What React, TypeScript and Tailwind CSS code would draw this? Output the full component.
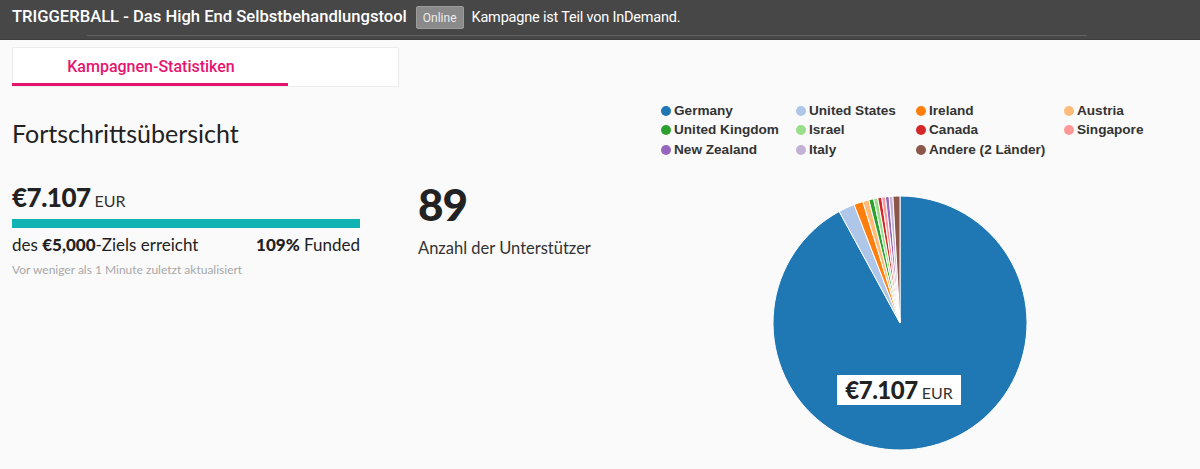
const slices = [
  { name: "Germany", color: "#1f77b4", deg: 331.4 },
  { name: "United States", color: "#aec7e8", deg: 7.4 },
  { name: "Ireland", color: "#ff7f0e", deg: 4.2 },
  { name: "Austria", color: "#ffbb78", deg: 2.8 },
  { name: "United Kingdom", color: "#2ca02c", deg: 2.2 },
  { name: "Israel", color: "#98df8a", deg: 1.9 },
  { name: "Canada", color: "#d62728", deg: 1.8 },
  { name: "Singapore", color: "#ff9896", deg: 1.7 },
  { name: "New Zealand", color: "#9467bd", deg: 1.7 },
  { name: "Italy", color: "#c5b0d5", deg: 1.7 },
  { name: "Andere (2 Länder)", color: "#8c564b", deg: 3.2 },
];

// legend is laid out row by row, four per row
const legendCols = ["w-[135px]", "w-[120px]", "w-[148px]", "w-[110px]"];

function arcPath(cx: number, cy: number, r: number, a0: number, a1: number) {
  const p = (a: number) => {
    const rad = (a * Math.PI) / 180;
    return [cx + r * Math.sin(rad), cy - r * Math.cos(rad)];
  };
  const [x0, y0] = p(a0);
  const [x1, y1] = p(a1);
  const large = a1 - a0 > 180 ? 1 : 0;
  return `M${cx},${cy}L${x0},${y0}A${r},${r} 0 ${large} 1 ${x1},${y1}Z`;
}

function Pie() {
  let start = 0;
  const cx = 245;
  const cy = 128;
  const r = 127;
  return (
    <svg width="545" height="260" className="block">
      {slices.map((s) => {
        const d = arcPath(cx, cy, r, start, start + s.deg);
        start += s.deg;
        return <path key={s.name} d={d} fill={s.color} stroke="#ffffff" strokeWidth="1" />;
      })}
    </svg>
  );
}

export default function App() {
  return (
    <div className="w-[1200px] h-[469px] overflow-hidden bg-[#fafafa] text-[#222]" style={{ fontFamily: "Lato, 'Liberation Sans', sans-serif" }}>
      {/* top bar */}
      <div className="h-[40px] bg-[#474747] flex flex-col border-b border-[#3d3d3d]">
        <div className="h-[35px] flex items-center pl-[12px] gap-[8px] text-white" style={{ fontFamily: "Roboto, 'Liberation Sans', sans-serif" }}>
          <span className="text-[16.6px] font-medium">TRIGGERBALL - Das High End Selbstbehandlungstool</span>
          <span className="ml-[1px] h-[23px] px-[6px] flex items-center bg-[#8a8a8a] border border-[#9b9b9b] rounded-[2px] text-[12px] text-[#ececec]">Online</span>
          <span className="text-[14.5px] tracking-[-0.2px]">Kampagne ist Teil von InDemand.</span>
        </div>
        <div className="ml-[87px] w-[1000px] h-px bg-[#626262]" />
      </div>

      <div className="pl-[12px] pt-[7px]">
        {/* tab */}
        <div className="w-[387px] h-[40px] bg-white border border-[#ececec] flex flex-col">
          <div className="flex-1 flex items-center">
            <span className="w-[276px] text-center text-[16px] font-medium text-[#e5146f] pt-[2px]" style={{ fontFamily: "Roboto, 'Liberation Sans', sans-serif" }}>
              Kampagnen-Statistiken
            </span>
          </div>
          <div className="w-[276px] h-[3px] bg-[#e5146f] -ml-px" />
        </div>

        <div className="flex mt-[16px]">
          {/* progress */}
          <div className="w-[348px] pt-[14px]">
            <h2 className="text-[25px] leading-[32px] text-[#222]">Fortschrittsübersicht</h2>
            <div className="mt-[33px] flex items-baseline gap-[4px]">
              <span className="text-[26px] leading-[30px] font-black tracking-[-0.5px]">€7.107</span>
              <span className="text-[16px] text-[#333]">EUR</span>
            </div>
            <div className="mt-[6px] h-[9px] bg-[#0fb3b3]" />
            <div className="mt-[7px] flex justify-between text-[17px] leading-[20px] text-[#222]">
              <span>
                des <b className="font-black">€5,000</b>-Ziels erreicht
              </span>
              <span>
                <b className="font-black">109%</b> Funded
              </span>
            </div>
            <p className="mt-[6px] text-[12px] text-[#a8a8a8]">Vor weniger als 1 Minute zuletzt aktualisiert</p>
          </div>

          {/* backers */}
          <div className="ml-[58px] w-[237px] pt-[78px]">
            <div className="text-[44px] leading-[46px] font-black tracking-[-1px]">89</div>
            <div className="mt-[9px] text-[16.5px] text-[#333]">Anzahl der Unterstützer</div>
          </div>

          {/* chart */}
          <div className="flex-1 -mt-[2px]">
            <div className="pl-[6px] flex flex-wrap w-[540px]" style={{ fontFamily: "'Liberation Sans', Arial, sans-serif" }}>
              {slices.map((s, i) => (
                <div key={s.name} className={`${legendCols[i % 4]} h-[19.5px] flex items-center gap-[3px] text-[13.6px] font-bold text-[#333]`}>
                  <span className="w-[10px] h-[10px] rounded-full shrink-0" style={{ backgroundColor: s.color }} />
                  {s.name}
                </div>
              ))}
            </div>
            <div className="relative mt-[35px]">
              <Pie />
              <div className="absolute left-[182px] top-[180px] w-[124px] h-[30px] bg-white flex items-baseline justify-center gap-[4px] pt-[1px]">
                <span className="text-[24px] leading-[28px] font-black tracking-[-0.5px]">€7.107</span>
                <span className="text-[16px] text-[#333]">EUR</span>
              </div>
            </div>
          </div>
        </div>
      </div>
    </div>
  );
}
